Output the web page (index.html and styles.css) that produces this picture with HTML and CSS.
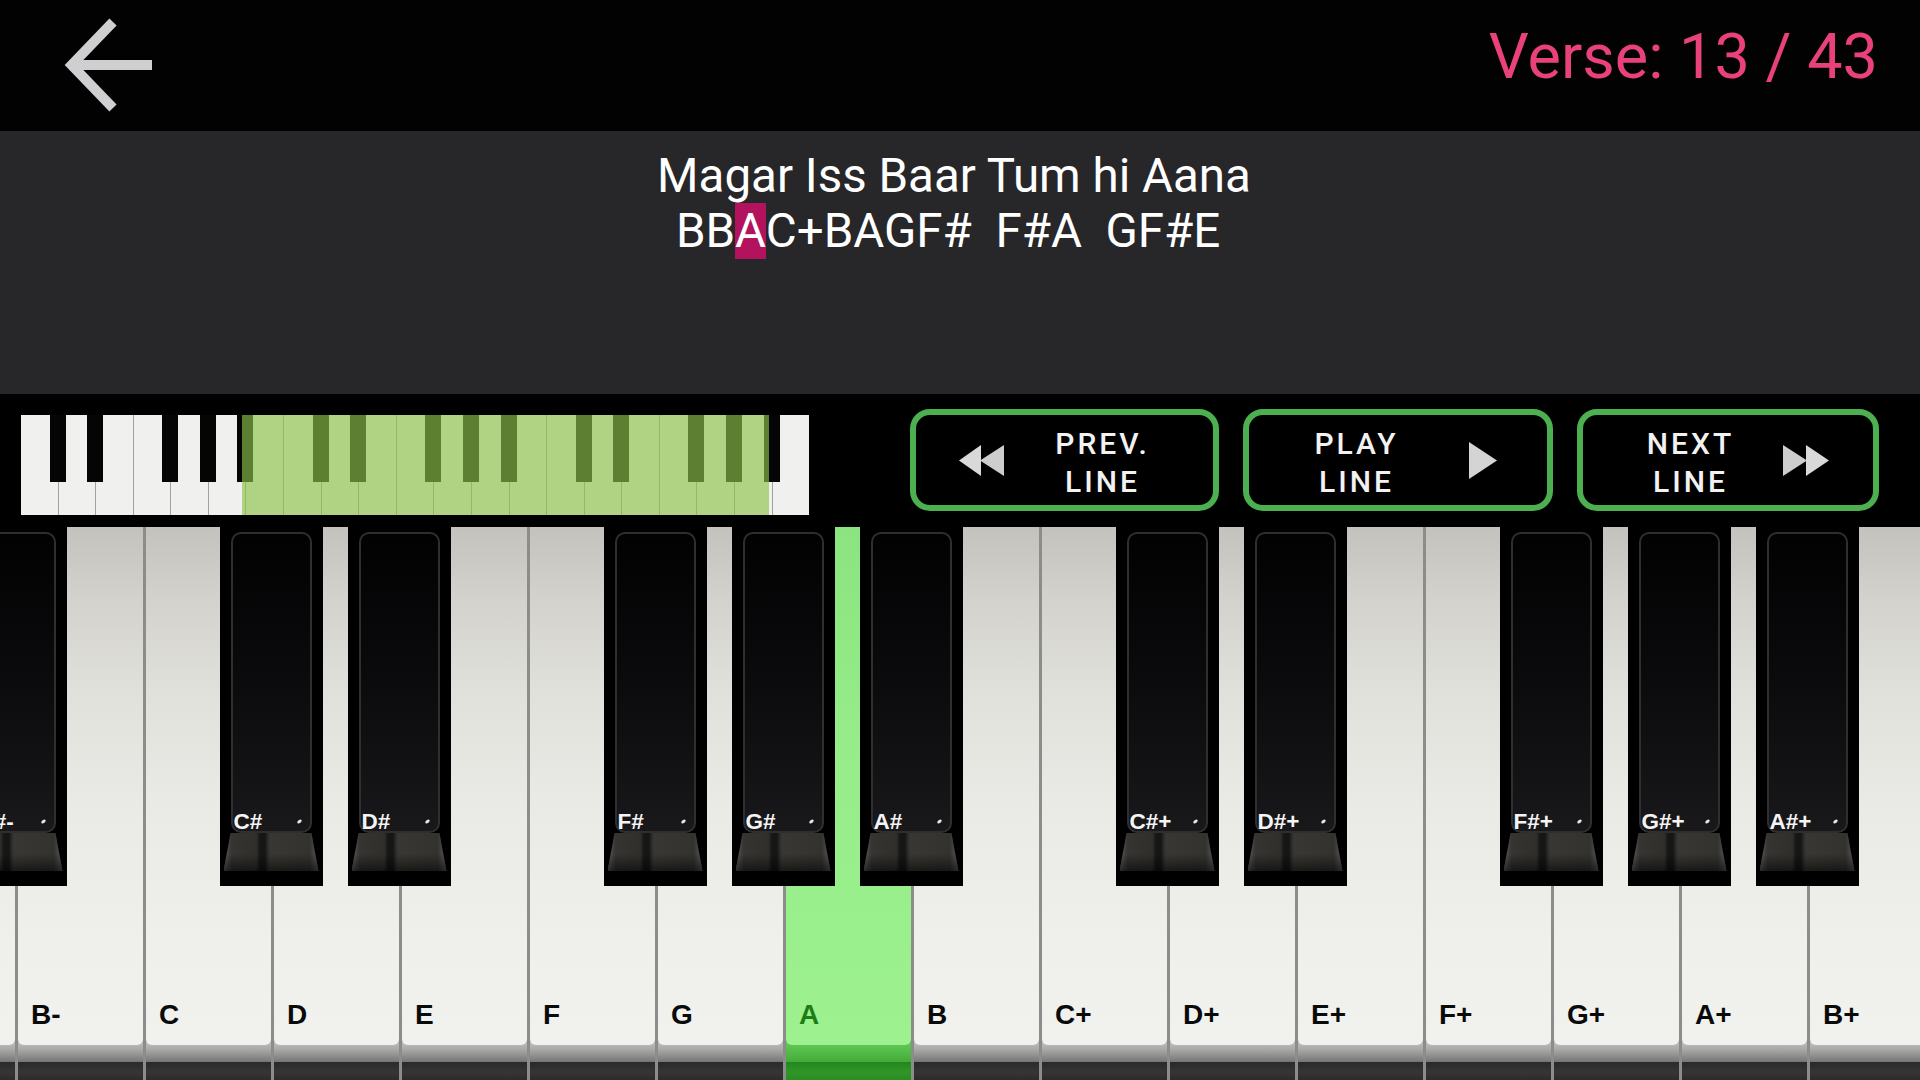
FILE: index.html
```html
<!DOCTYPE html>
<html>
<head>
<meta charset="utf-8">
<link rel="stylesheet" href="styles.css">
</head>
<body>
<div class="app">
  <header class="topbar">
    <svg class="back" viewBox="0 0 100 100" width="100" height="100">
      <polyline points="55,7 13.6,50 55,93" fill="none" stroke="#cfcfd1" stroke-width="10" stroke-linejoin="miter" stroke-miterlimit="10"/>
      <line x1="16" y1="50" x2="94" y2="50" stroke="#cfcfd1" stroke-width="10"/>
    </svg>
    <div class="verse">Verse: 13 / 43</div>
  </header>

  <section class="lyrics">
    <div class="line">Magar Iss Baar Tum hi Aana</div>
    <div class="line notes">BB<span class="cur">A</span>C+BAGF#  F#A  GF#E </div>
  </section>

  <section class="controls">
    <div class="mini">
      <div class="mk"><i class="mbk"></i></div>
      <div class="mk"><i class="mbk"></i></div>
      <div class="mk"></div>
      <div class="mk"><i class="mbk"></i></div>
      <div class="mk"><i class="mbk"></i></div>
      <div class="mk"><i class="mbk"></i></div>
      <div class="mk"></div>
      <div class="mk"><i class="mbk"></i></div>
      <div class="mk"><i class="mbk"></i></div>
      <div class="mk"></div>
      <div class="mk"><i class="mbk"></i></div>
      <div class="mk"><i class="mbk"></i></div>
      <div class="mk"><i class="mbk"></i></div>
      <div class="mk"></div>
      <div class="mk"><i class="mbk"></i></div>
      <div class="mk"><i class="mbk"></i></div>
      <div class="mk"></div>
      <div class="mk"><i class="mbk"></i></div>
      <div class="mk"><i class="mbk"></i></div>
      <div class="mk"><i class="mbk"></i></div>
      <div class="mk"></div>
      <div class="range"></div>
    </div>

    <div class="buttons">
      <div class="btn b-prev">
        <svg class="ico" viewBox="0 0 45 31" width="45" height="31">
          <polygon points="0,15.5 22,0 22,31" fill="#d9d9d9"/>
          <polygon points="21,15.5 45,0 45,31" fill="#cdcdcd"/>
        </svg>
        <div class="btxt">PREV.<br>LINE</div>
      </div>
      <div class="btn b-play">
        <div class="btxt">PLAY<br>LINE</div>
        <svg class="ico" viewBox="0 0 28 37" width="28" height="37">
          <polygon points="0,0 28,18.5 0,37" fill="#d4d4d4"/>
        </svg>
      </div>
      <div class="btn b-next">
        <div class="btxt">NEXT<br>LINE</div>
        <svg class="ico" viewBox="0 0 46 31" width="46" height="31">
          <polygon points="0,0 24,15.5 0,31" fill="#cdcdcd"/>
          <polygon points="23,0 46,15.5 23,31" fill="#d9d9d9"/>
        </svg>
      </div>
    </div>
  </section>

  <section class="piano">
    <div class="keys">
      <div class="wk"><div class="face"></div>
        <div class="bk"><div class="bface"></div><div class="bfront"></div><span class="blbl">A#-</span><i class="dot"></i></div></div>
      <div class="wk"><div class="face"><span class="lbl">B-</span></div></div>
      <div class="wk"><div class="face"><span class="lbl">C</span></div>
        <div class="bk"><div class="bface"></div><div class="bfront"></div><span class="blbl">C#</span><i class="dot"></i></div></div>
      <div class="wk"><div class="face"><span class="lbl">D</span></div>
        <div class="bk"><div class="bface"></div><div class="bfront"></div><span class="blbl">D#</span><i class="dot"></i></div></div>
      <div class="wk"><div class="face"><span class="lbl">E</span></div></div>
      <div class="wk"><div class="face"><span class="lbl">F</span></div>
        <div class="bk"><div class="bface"></div><div class="bfront"></div><span class="blbl">F#</span><i class="dot"></i></div></div>
      <div class="wk"><div class="face"><span class="lbl">G</span></div>
        <div class="bk"><div class="bface"></div><div class="bfront"></div><span class="blbl">G#</span><i class="dot"></i></div></div>
      <div class="wk on"><div class="face"><span class="lbl">A</span></div>
        <div class="bk"><div class="bface"></div><div class="bfront"></div><span class="blbl">A#</span><i class="dot"></i></div></div>
      <div class="wk"><div class="face"><span class="lbl">B</span></div></div>
      <div class="wk"><div class="face"><span class="lbl">C+</span></div>
        <div class="bk"><div class="bface"></div><div class="bfront"></div><span class="blbl">C#+</span><i class="dot"></i></div></div>
      <div class="wk"><div class="face"><span class="lbl">D+</span></div>
        <div class="bk"><div class="bface"></div><div class="bfront"></div><span class="blbl">D#+</span><i class="dot"></i></div></div>
      <div class="wk"><div class="face"><span class="lbl">E+</span></div></div>
      <div class="wk"><div class="face"><span class="lbl">F+</span></div>
        <div class="bk"><div class="bface"></div><div class="bfront"></div><span class="blbl">F#+</span><i class="dot"></i></div></div>
      <div class="wk"><div class="face"><span class="lbl">G+</span></div>
        <div class="bk"><div class="bface"></div><div class="bfront"></div><span class="blbl">G#+</span><i class="dot"></i></div></div>
      <div class="wk"><div class="face"><span class="lbl">A+</span></div>
        <div class="bk"><div class="bface"></div><div class="bfront"></div><span class="blbl">A#+</span><i class="dot"></i></div></div>
      <div class="wk"><div class="face"><span class="lbl">B+</span></div></div>
    </div>
  </section>
</div>
</body>
</html>
```

FILE: styles.css
```css
html, body {
  margin: 0;
  padding: 0;
  background: #000;
}
.app {
  width: 1920px;
  height: 1080px;
  overflow: hidden;
  display: flex;
  flex-direction: column;
  font-family: Roboto, "Noto Sans", sans-serif;
}

/* header */
.topbar {
  height: 131px;
  flex: none;
  display: flex;
  justify-content: space-between;
  align-items: flex-start;
  background: #020202;
}
.back {
  margin: 15px 0 0 58px;
  display: block;
}
.verse {
  padding: 20px 42px 0 0;
  font-size: 63px;
  line-height: 1.172;
  font-weight: 400;
  color: #e9417c;
}

/* lyrics */
.lyrics {
  height: 263px;
  flex: none;
  box-sizing: border-box;
  padding: 18px 12px 0 0;
  background: #272629;
  color: #fff;
  text-align: center;
  font-size: 47.5px;
  line-height: 55px;
}
.line {
  white-space: pre;
}
.cur {
  background: #b3125e;
}

/* controls */
.controls {
  height: 133px;
  flex: none;
  display: flex;
  align-items: flex-start;
  background: #000;
}
.mini {
  margin: 21px 0 0 21px;
  width: 788px;
  height: 100px;
  position: relative;
  display: flex;
}
.mk {
  flex: 1;
  position: relative;
  background: #f0f0ee;
  border-left: 1px solid #a2a2a0;
}
.mk:first-child {
  border-left: none;
}
.mbk {
  position: absolute;
  z-index: 2;
  top: 0;
  right: -8px;
  width: 16px;
  height: 67px;
  background: #050505;
}
.range {
  position: absolute;
  z-index: 3;
  top: 0;
  bottom: 0;
  left: 221px;
  width: 527px;
  background: rgba(142, 193, 73, 0.65);
}

.buttons {
  display: flex;
  gap: 24px;
  margin: 15px 0 0 101px;
}
.btn {
  height: 102px;
  box-sizing: border-box;
  border: 6px solid #4caf50;
  border-radius: 20px;
  background: #000;
  display: flex;
  align-items: center;
}
.b-prev { width: 309px; padding-left: 43px; gap: 37px; }
.b-play { width: 310px; padding-left: 46px; gap: 54px; }
.b-next { width: 302px; padding-left: 46px; gap: 34px; }
.ico { display: block; flex: none; }
.btxt {
  width: 120px;
  flex: none;
  box-sizing: border-box;
  padding: 5px 0 0 3px;
  text-align: center;
  color: #f2f2f2;
  font-size: 30px;
  font-weight: 500;
  line-height: 38px;
  letter-spacing: 3px;
}

/* piano */
.piano {
  height: 553px;
  flex: none;
  overflow: hidden;
  display: flex;
}
.keys {
  display: flex;
  margin-left: -113px;
}
.wk {
  width: 128px;
  height: 553px;
  flex: none;
  box-sizing: border-box;
  position: relative;
  border-left: 3px solid #8c8c8a;
  background: linear-gradient(to bottom,
    #bdbdbb 0, #bdbdbb 516px, #a3a3a1 524px, #757573 535px,
    #2a2a2a 535px, #353535 545px, #2c2c2c 553px);
}
.face {
  height: 518px;
  box-sizing: border-box;
  border-radius: 0 0 6px 6px;
  background: linear-gradient(to bottom,
    #c3c2bd 0%, #d3d2cd 14%, #e1e1dc 32%, #eaeae6 55%, #efefeb 80%, #f1f1ee 100%);
  display: flex;
  align-items: flex-end;
  padding: 0 0 16px 13px;
}
.lbl {
  font-family: "Liberation Sans", Arial, sans-serif;
  font-weight: 700;
  font-size: 28px;
  line-height: 28px;
  color: #0a0a0a;
}
.wk.on {
  background: linear-gradient(to bottom,
    #62c756 0, #62c756 516px, #55bd49 524px, #44ab3a 535px,
    #23861c 535px, #2f9627 545px, #2a8c22 553px);
}
.wk.on .face {
  background: linear-gradient(to bottom, #8be47f 0%, #95ec88 40%, #9df28f 100%);
}
.wk.on .lbl {
  color: #1d7d15;
}

.bk {
  position: absolute;
  z-index: 2;
  top: 0;
  right: -51.5px;
  width: 103px;
  height: 359px;
  background: #000;
}
.bface {
  position: absolute;
  left: 11px;
  right: 11px;
  top: 5px;
  height: 301px;
  box-sizing: border-box;
  border: 2px solid #2f2f30;
  border-radius: 10px;
  background: linear-gradient(to bottom, #020203 0%, #0a0a0c 45%, #141416 85%, #19191b 100%);
}
.bfront {
  position: absolute;
  left: 4px;
  right: 4px;
  top: 306px;
  height: 38px;
  clip-path: polygon(7px 0, calc(100% - 7px) 0, 100% 100%, 0 100%);
  background:
    linear-gradient(to bottom, rgba(0,0,0,0) 0%, rgba(0,0,0,0) 55%, rgba(0,0,0,0.55) 100%),
    linear-gradient(to right, #5a5a58 0, #353431 8%, #302f2c 34%, #161616 38%, #161616 43%, #383733 48%, #33322f 90%, #5a5a58 100%);
}
.blbl {
  position: absolute;
  left: 14px;
  top: 284px;
  font-family: "Liberation Sans", Arial, sans-serif;
  font-weight: 700;
  font-size: 22.5px;
  line-height: 22px;
  color: #f4f4f4;
}
.dot {
  position: absolute;
  left: 77px;
  top: 293px;
  width: 5px;
  height: 3px;
  border-radius: 50%;
  background: #e8e8e8;
  transform: rotate(-35deg);
}
```
